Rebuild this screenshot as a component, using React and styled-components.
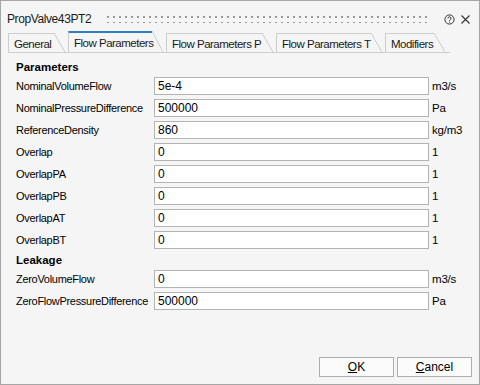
import React from 'react';
import styled, { createGlobalStyle } from 'styled-components';

const Global = createGlobalStyle`
  html, body, #root {
    margin: 0;
    height: 100%;
  }
  body {
    font-family: "Liberation Sans", Arial, sans-serif;
    font-size: 11px;
    color: #000;
    background: #f5f5f5;
  }
`;

const Window = styled.div`
  display: flex;
  flex-direction: column;
  box-sizing: border-box;
  width: 480px;
  height: 385px;
  border: 1px solid #a6a6a6;
  background: #f5f5f5;
`;

const TitleBar = styled.div`
  display: flex;
  align-items: center;
  height: 30px;
  padding: 6px 8px 0 6px;
  box-sizing: border-box;
`;

const Title = styled.span`
  font-size: 12px;
  letter-spacing: -0.4px;
  color: #1a1a1a;
`;

const Grip = styled.div`
  flex: 1;
  height: 8px;
  margin: 0 12px 0 16px;
  background-image: radial-gradient(circle, #9a9a9a 0.8px, transparent 1.1px);
  background-size: 6px 6px;
  background-position: -2px -1px;
`;

const TitleIcon = styled.svg`
  width: 11px;
  height: 11px;
  margin-left: 5px;
`;

const TabStrip = styled.div`
  display: flex;
  align-items: flex-end;
  width: 442px;
  margin-left: 7px;
  border-bottom: 1px solid #cdcdcd;
`;

const Tab = styled.div`
  display: flex;
  height: ${(p) => (p.$active ? 21 : 19)}px;
  margin-right: 3px;
`;

const TabLabel = styled.div`
  display: flex;
  align-items: center;
  box-sizing: border-box;
  width: ${(p) => p.$w}px;
  padding: 1px 0 0 5px;
  border-left: 1px solid #cdcdcd;
  border-top: ${(p) => (p.$active ? '2px solid #2f7fc0' : '1px solid #cdcdcd')};
  font-size: 11.5px;
  letter-spacing: -0.5px;
  color: #1a1a1a;
  white-space: nowrap;
`;

const TabSlant = styled.div`
  width: 11px;
  background: linear-gradient(
    to top right,
    transparent calc(50% - 0.7px),
    #c4c4c4 50%,
    transparent calc(50% + 0.7px)
  );
`;

const Content = styled.div`
  padding: 5px 0 0 15px;
`;

const SectionHeader = styled.div`
  display: flex;
  align-items: center;
  height: 18px;
  margin: ${(p) => (p.$first ? '0 0 1px' : '2px 0 1px')};
  font-weight: bold;
  font-size: 11.5px;
`;

const Grid = styled.div`
  display: grid;
  grid-template-columns: 135px 275px auto;
  grid-auto-rows: 18px;
  row-gap: 4px;
  column-gap: 3px;
  align-items: center;
`;

const Label = styled.span`
  letter-spacing: -0.3px;
  white-space: nowrap;
`;

const Field = styled.input`
  box-sizing: border-box;
  height: 18px;
  width: 100%;
  margin: 0;
  padding: 0 3px;
  border: 1px solid #b3b3b3;
  background: #fff;
  font-family: "Liberation Sans", Arial, sans-serif;
  font-size: 12px;
  color: #000;
  outline: none;
`;

const Unit = styled.span`
  font-size: 11.5px;
  letter-spacing: -0.2px;
`;

const Footer = styled.div`
  display: flex;
  justify-content: flex-end;
  gap: 3px;
  margin-top: auto;
  padding: 0 7px 7px 0;
`;

const Button = styled.button`
  width: 75px;
  height: 20px;
  padding: 0;
  border: 1px solid #adadad;
  background: #fbfbfb;
  font-family: "Liberation Sans", Arial, sans-serif;
  font-size: 12px;
  color: #000;
  u {
    text-decoration: underline;
  }
`;

const tabs = [
  { name: 'General', w: 46 },
  { name: 'Flow Parameters', w: 84, active: true },
  { name: 'Flow Parameters P', w: 96 },
  { name: 'Flow Parameters T', w: 95 },
  { name: 'Modifiers', w: 49 },
];

const parameters = [
  ['NominalVolumeFlow', '5e-4', 'm3/s'],
  ['NominalPressureDifference', '500000', 'Pa'],
  ['ReferenceDensity', '860', 'kg/m3'],
  ['Overlap', '0', '1'],
  ['OverlapPA', '0', '1'],
  ['OverlapPB', '0', '1'],
  ['OverlapAT', '0', '1'],
  ['OverlapBT', '0', '1'],
];

const leakage = [
  ['ZeroVolumeFlow', '0', 'm3/s'],
  ['ZeroFlowPressureDifference', '500000', 'Pa'],
];

const Rows = ({ rows }) => (
  <Grid>
    {rows.map(([label, value, unit]) => (
      <React.Fragment key={label}>
        <Label>{label}</Label>
        <Field defaultValue={value} />
        <Unit>{unit}</Unit>
      </React.Fragment>
    ))}
  </Grid>
);

const App = () => {
  return (
    <>
      <Global />
      <Window>
        <TitleBar>
          <Title>PropValve43PT2</Title>
          <Grip />
          <TitleIcon viewBox="0 0 11 11">
            <circle cx="5.5" cy="5.5" r="4.6" fill="none" stroke="#333" strokeWidth="1" />
            <path d="M3.9 4.4a1.6 1.5 0 1 1 2.3 1.3c-.5.3-.7.6-.7 1.1" fill="none" stroke="#333" strokeWidth="1" />
            <rect x="5" y="7.6" width="1" height="1" fill="#333" />
          </TitleIcon>
          <TitleIcon viewBox="0 0 11 11">
            <path d="M1.5 1.5l8 8M9.5 1.5l-8 8" stroke="#333" strokeWidth="1.1" />
          </TitleIcon>
        </TitleBar>
        <TabStrip>
          {tabs.map((t) => (
            <Tab key={t.name} $active={t.active}>
              <TabLabel $w={t.w} $active={t.active}>{t.name}</TabLabel>
              <TabSlant />
            </Tab>
          ))}
        </TabStrip>
        <Content>
          <SectionHeader $first>Parameters</SectionHeader>
          <Rows rows={parameters} />
          <SectionHeader>Leakage</SectionHeader>
          <Rows rows={leakage} />
        </Content>
        <Footer>
          <Button><u>O</u>K</Button>
          <Button><u>C</u>ancel</Button>
        </Footer>
      </Window>
    </>
  );
};

export default App;
